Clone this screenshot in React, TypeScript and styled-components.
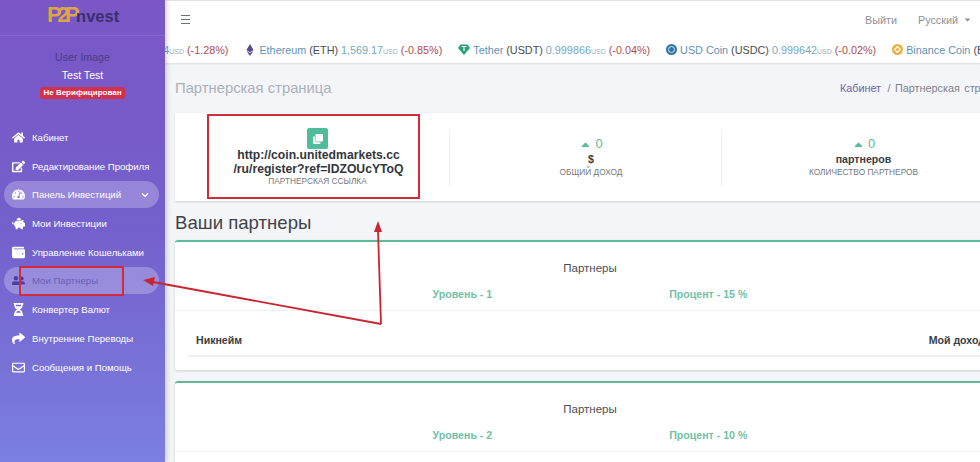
import React from 'react'
import styled, { createGlobalStyle } from 'styled-components'
import {
    FaCaretDown,
    FaCaretUp,
    FaChevronDown,
    FaClone,
    FaEdit,
    FaEthereum,
    FaHome,
    FaHourglassHalf,
    FaPiggyBank,
    FaRegEnvelope,
    FaShare,
    FaTachometerAlt,
    FaUserFriends,
    FaWallet,
} from 'react-icons/fa'

const GlobalStyle = createGlobalStyle`
    html, body {
        margin: 0;
        padding: 0;
        background: #f3f5f9;
        font-family: "Liberation Sans", Arial, sans-serif;
    }
`

const Page = styled.div`
    position: relative;
    display: flex;
    width: 980px;
    height: 462px;
    overflow: hidden;
    background: #f3f5f9;
`

const Sidebar = styled.aside`
    flex: 0 0 165px;
    width: 165px;
    min-width: 0;
    height: 462px;
    position: relative;
    z-index: 2;
    background: linear-gradient(180deg, #7a56c6 0%, #7460cc 50%, #7b7fdf 100%);
    box-shadow: 2px 0 5px rgba(0, 0, 0, 0.16);
`

const Brand = styled.div`
    height: 36px;
    box-sizing: border-box;
    padding: 2px 0 0 47px;
    border-bottom: 1px solid rgba(255, 255, 255, 0.1);
    font-size: 16.5px;
    font-weight: 700;
    line-height: 26px;
    color: #3b2f70;
    white-space: nowrap;
`

const BrandMark = styled.span`
    color: #dca54c;
    font-size: 22px;
    letter-spacing: -4.5px;
    margin-right: 1px;
`

const Profile = styled.div`
    display: flex;
    flex-direction: column;
    align-items: center;
    padding-top: 14px;
    height: 88px;
    box-sizing: border-box;
`

const UserImage = styled.div`
    font-size: 10.6px;
    line-height: 14px;
    color: #4a3d8c;
`

const UserName = styled.div`
    margin-top: 4px;
    font-size: 10.6px;
    line-height: 14px;
    color: #fff;
`

const Badge = styled.div`
    margin-top: 5px;
    padding: 0 3px;
    height: 12px;
    border-radius: 3px;
    background: #d2304c;
    color: #fff;
    font-size: 8px;
    font-weight: 700;
    line-height: 12px;
`

const NavList = styled.nav`
    display: flex;
    flex-direction: column;
    gap: 1.7px;
    padding: 0 6px 0 4px;
`

const NavItem = styled.div<{ $active?: boolean; $muted?: boolean }>`
    display: flex;
    align-items: center;
    height: 27px;
    padding: 0 10px 0 4px;
    border-radius: 14px;
    background: ${(p) => (p.$active ? 'rgba(255, 255, 255, 0.25)' : 'transparent')};
    color: ${(p) => (p.$muted ? '#6a5fb4' : '#fff')};
    font-size: 9.6px;
    white-space: nowrap;
`

const NavIcon = styled.span<{ $muted?: boolean }>`
    display: flex;
    justify-content: center;
    flex: 0 0 20px;
    margin-right: 4px;
    font-size: 13px;
    color: ${(p) => (p.$muted ? '#4b3f9c' : '#fff')};
`

const NavCaret = styled.span`
    margin-left: auto;
    display: flex;
    font-size: 8px;
`

const Main = styled.main`
    flex: 1;
    min-width: 0;
    display: flex;
    flex-direction: column;
    border-top: 1px solid #e2e2e2;
`

const TopBar = styled.header`
    height: 37px;
    flex: none;
    display: flex;
    align-items: center;
    background: #fff;
    color: #8d9197;
    font-size: 10.8px;
`

const Burger = styled.span`
    display: block;
    width: 9px;
    height: 7px;
    margin-left: 16px;
    border-top: 1.4px solid #6d7278;
    border-bottom: 1.4px solid #6d7278;
    position: relative;
    &::after {
        content: '';
        position: absolute;
        left: 0;
        right: 0;
        top: 2.8px;
        height: 1.4px;
        background: #6d7278;
    }
`

const TopLinks = styled.div`
    margin-left: auto;
    display: flex;
    align-items: center;
    gap: 21px;
    padding-right: 8px;
`

const Lang = styled.span`
    display: flex;
    align-items: center;
    gap: 5px;
`

const Ticker = styled.div`
    height: 25px;
    flex: none;
    box-sizing: border-box;
    padding-bottom: 2px;
    display: flex;
    align-items: center;
    gap: 16px;
    margin-left: -43px;
    background: #fff;
    box-shadow: 0 1px 2px rgba(0, 0, 0, 0.1);
    font-size: 10.8px;
    white-space: nowrap;
    position: relative;
`

const Coin = styled.span`
    display: flex;
    flex: none;
    align-items: center;
    gap: 3px;
`

const CoinName = styled.span`
    color: #5f93b5;
`

const CoinCode = styled.span`
    color: #4a4d50;
`

const CoinPrice = styled.span`
    color: #72a9c0;
`

const CoinUnit = styled.small`
    color: #9eb0ba;
    font-size: 7px;
`

const CoinChange = styled.span`
    color: #b04a50;
`

const Content = styled.div`
    width: 830px;
    padding: 0 0 0 10px;
`

const TitleRow = styled.div`
    display: flex;
    justify-content: space-between;
    align-items: center;
    height: 50px;
    width: 805px;
    white-space: nowrap;
`

const PageTitle = styled.h1`
    margin: 0;
    font-size: 14.8px;
    font-weight: 400;
    color: #adb1b8;
`

const Crumbs = styled.div`
    font-size: 10.8px;
    word-spacing: 1.5px;
    color: #7d8187;
    width: 140px;
    overflow: hidden;
`

const CrumbLink = styled.span`
    color: #6f5fa8;
    margin-right: 2px;
`

const StatsCard = styled.section`
    display: grid;
    grid-template-columns: 275px 272px 272px;
    width: 830px;
    height: 88px;
    align-items: center;
    background: #fff;
    box-shadow: 0 1px 2px rgba(0, 0, 0, 0.12);
`

const Stat = styled.div<{ $divider?: boolean }>`
    height: 57px;
    box-sizing: border-box;
    padding-left: 11px;
    display: flex;
    flex-direction: column;
    align-items: center;
    justify-content: center;
    border-right: ${(p) => (p.$divider ? '1px solid #eeeff1' : 'none')};
`

const CopyTile = styled.span`
    width: 21px;
    height: 21px;
    flex: none;
    border-radius: 2px;
    background: #4fbd9c;
    color: #fff;
    display: flex;
    align-items: center;
    justify-content: center;
    font-size: 10px;
    margin-bottom: -1px;
`

const RefLink = styled.div`
    margin-left: 2px;
    font-size: 12.2px;
    font-weight: 700;
    line-height: 14px;
    color: #33363a;
    text-align: center;
    white-space: nowrap;
`

const StatLabel = styled.div`
    font-size: 8.3px;
    line-height: 10px;
    color: #73777d;
    text-transform: uppercase;
`

const StatValue = styled.div`
    display: flex;
    align-items: center;
    gap: 3px;
    color: #5cbb9c;
    font-size: 13px;
    line-height: 14px;
`

const StatUnit = styled.div`
    margin-top: 1px;
    margin-bottom: 1px;
    font-size: 10.6px;
    font-weight: 700;
    line-height: 14px;
    color: #3a3d41;
`

const SectionTitle = styled.h2`
    margin: 0;
    height: 39px;
    box-sizing: border-box;
    padding-top: 10px;
    font-size: 18.6px;
    line-height: 24px;
    font-weight: 400;
    color: #3f4347;
`

const LevelCard = styled.section`
    background: #fff;
    border-top: 2px solid #62b89c;
    border-radius: 3px;
    box-shadow: 0 1px 3px rgba(0, 0, 0, 0.16);
    margin-bottom: 11px;
`

const LevelHead = styled.div`
    height: 69px;
    box-sizing: border-box;
    padding-top: 19px;
    border-bottom: 1px solid #f0f0f0;
    text-align: center;
`

const LevelTitle = styled.div`
    font-size: 11.5px;
    line-height: 14px;
    color: #4b4e52;
`

const LevelMeta = styled.div`
    display: flex;
    justify-content: center;
    gap: 177px;
    margin-top: 13px;
    font-size: 10.6px;
    font-weight: 700;
    line-height: 13px;
    color: #6fc2a5;
`

const TableRow = styled.div`
    display: flex;
    justify-content: space-between;
    margin: 0 13px;
    height: 46px;
    box-sizing: border-box;
    padding: 22px 7px 0 8px;
    border-bottom: 2px solid #eeeff1;
    font-size: 10.6px;
    font-weight: 700;
    line-height: 14px;
    color: #3a3d41;
`

const TableGap = styled.div`
    height: 13px;
`

const Markup = styled.div<{ $x: number; $y: number; $w: number; $h: number }>`
    position: absolute;
    z-index: 3;
    left: ${(p) => p.$x}px;
    top: ${(p) => p.$y}px;
    width: ${(p) => p.$w}px;
    height: ${(p) => p.$h}px;
    box-sizing: border-box;
    border: 2px solid #d22c3c;
`

const Arrows = styled.svg`
    position: absolute;
    z-index: 3;
    inset: 0;
    pointer-events: none;
`

const navItems = [
    { label: 'Кабинет', icon: <FaHome /> },
    { label: 'Редактирование Профиля', icon: <FaEdit /> },
    { label: 'Панель Инвестиций', icon: <FaTachometerAlt />, active: true, caret: true },
    { label: 'Мои Инвестиции', icon: <FaPiggyBank /> },
    { label: 'Управление Кошельками', icon: <FaWallet /> },
    { label: 'Мои Партнеры', icon: <FaUserFriends />, active: true, muted: true },
    { label: 'Конвертер Валют', icon: <FaHourglassHalf /> },
    { label: 'Внутренние Переводы', icon: <FaShare /> },
    { label: 'Сообщения и Помощь', icon: <FaRegEnvelope /> },
]

const TetherIcon = () => (
    <svg width="12" height="11" viewBox="0 0 12 11">
        <path d="M2.5 0.5h7L12 4 6 11 0 4z" fill="#26a17b" />
        <path d="M3.5 2.5h5M6 2.5V7" stroke="#fff" strokeWidth="1.2" />
    </svg>
)

const UsdcIcon = () => (
    <svg width="11" height="11" viewBox="0 0 11 11">
        <circle cx="5.5" cy="5.5" r="5.5" fill="#2f75a8" />
        <circle cx="5.5" cy="5.5" r="3" fill="none" stroke="#dbe8f2" strokeWidth="1" />
    </svg>
)

const BinanceIcon = () => (
    <svg width="11" height="11" viewBox="0 0 11 11">
        <circle cx="5.5" cy="5.5" r="5.5" fill="#e9b143" />
        <path d="M5.5 2.6 8.4 5.5 5.5 8.4 2.6 5.5z" fill="none" stroke="#fff" strokeWidth="1.2" />
    </svg>
)

const coins = [
    { icon: <FaEthereum color="#5b4b8a" size={12} />, name: 'Ethereum', code: '(ETH)', price: '1,569.17', change: '(-0.85%)' },
    { icon: <TetherIcon />, name: 'Tether', code: '(USDT)', price: '0.999866', change: '(-0.04%)' },
    { icon: <UsdcIcon />, name: 'USD Coin', code: '(USDC)', price: '0.999642', change: '(-0.02%)' },
    { icon: <BinanceIcon />, name: 'Binance Coin', code: '(BNB)', price: '', change: '' },
]

const levels = [
    { level: 1, percent: 15 },
    { level: 2, percent: 10 },
]

const App = () => (
    <Page>
        <GlobalStyle />
        <Sidebar>
            <Brand>
                <BrandMark>P2P</BrandMark>nvest
            </Brand>
            <Profile>
                <UserImage>User Image</UserImage>
                <UserName>Test Test</UserName>
                <Badge>Не Верифицирован</Badge>
            </Profile>
            <NavList>
                {navItems.map((item) => (
                    <NavItem key={item.label} $active={item.active} $muted={item.muted}>
                        <NavIcon $muted={item.muted}>{item.icon}</NavIcon>
                        {item.label}
                        {item.caret && (
                            <NavCaret>
                                <FaChevronDown />
                            </NavCaret>
                        )}
                    </NavItem>
                ))}
            </NavList>
        </Sidebar>
        <Main>
            <TopBar>
                <Burger />
                <TopLinks>
                    <span>Выйти</span>
                    <Lang>
                        Русский <FaCaretDown size={9} />
                    </Lang>
                </TopLinks>
            </TopBar>
            <Ticker>
                <Coin>
                    <CoinPrice>
                        39,112.34<CoinUnit>USD</CoinUnit>
                    </CoinPrice>
                    <CoinChange>(-1.28%)</CoinChange>
                </Coin>
                {coins.map((coin) => (
                    <Coin key={coin.name}>
                        {coin.icon}
                        <CoinName>{coin.name}</CoinName>
                        <CoinCode>{coin.code}</CoinCode>
                        {coin.price && (
                            <CoinPrice>
                                {coin.price}
                                <CoinUnit>USD</CoinUnit>
                            </CoinPrice>
                        )}
                        {coin.change && <CoinChange>{coin.change}</CoinChange>}
                    </Coin>
                ))}
            </Ticker>
            <Content>
                <TitleRow>
                    <PageTitle>Партнерская страница</PageTitle>
                    <Crumbs>
                        <CrumbLink>Кабинет</CrumbLink> / Партнерская страница
                    </Crumbs>
                </TitleRow>
                <StatsCard>
                    <Stat $divider>
                        <CopyTile>
                            <FaClone />
                        </CopyTile>
                        <RefLink>
                            http://coin.unitedmarkets.cc
                            <br />
                            /ru/register?ref=IDZOUcYToQ
                        </RefLink>
                        <StatLabel>Партнерская ссылка</StatLabel>
                    </Stat>
                    <Stat $divider>
                        <StatValue>
                            <FaCaretUp size={13} /> 0
                        </StatValue>
                        <StatUnit>$</StatUnit>
                        <StatLabel>Общий доход</StatLabel>
                    </Stat>
                    <Stat>
                        <StatValue>
                            <FaCaretUp size={13} /> 0
                        </StatValue>
                        <StatUnit>партнеров</StatUnit>
                        <StatLabel>Количество партнеров</StatLabel>
                    </Stat>
                </StatsCard>
                <SectionTitle>Ваши партнеры</SectionTitle>
                {levels.map((row) => (
                    <LevelCard key={row.level}>
                        <LevelHead>
                            <LevelTitle>Партнеры</LevelTitle>
                            <LevelMeta>
                                <span>Уровень - {row.level}</span>
                                <span>Процент - {row.percent} %</span>
                            </LevelMeta>
                        </LevelHead>
                        <TableRow>
                            <span>Никнейм</span>
                            <span>Мой доход</span>
                        </TableRow>
                        <TableGap />
                    </LevelCard>
                ))}
            </Content>
        </Main>
        <Markup $x={207} $y={114} $w={213} $h={85} />
        <Markup $x={19} $y={266} $w={105} $h={30} />
        <Arrows width="980" height="462" viewBox="0 0 980 462">
            <path d="M381 324 153 282M378 231 381 324" fill="none" stroke="#c9242f" strokeWidth="1.8" />
            <path d="M143 280 155 277 153 286z M378 221 374 232 382 232z" fill="#c9242f" />
        </Arrows>
    </Page>
)

export default App
